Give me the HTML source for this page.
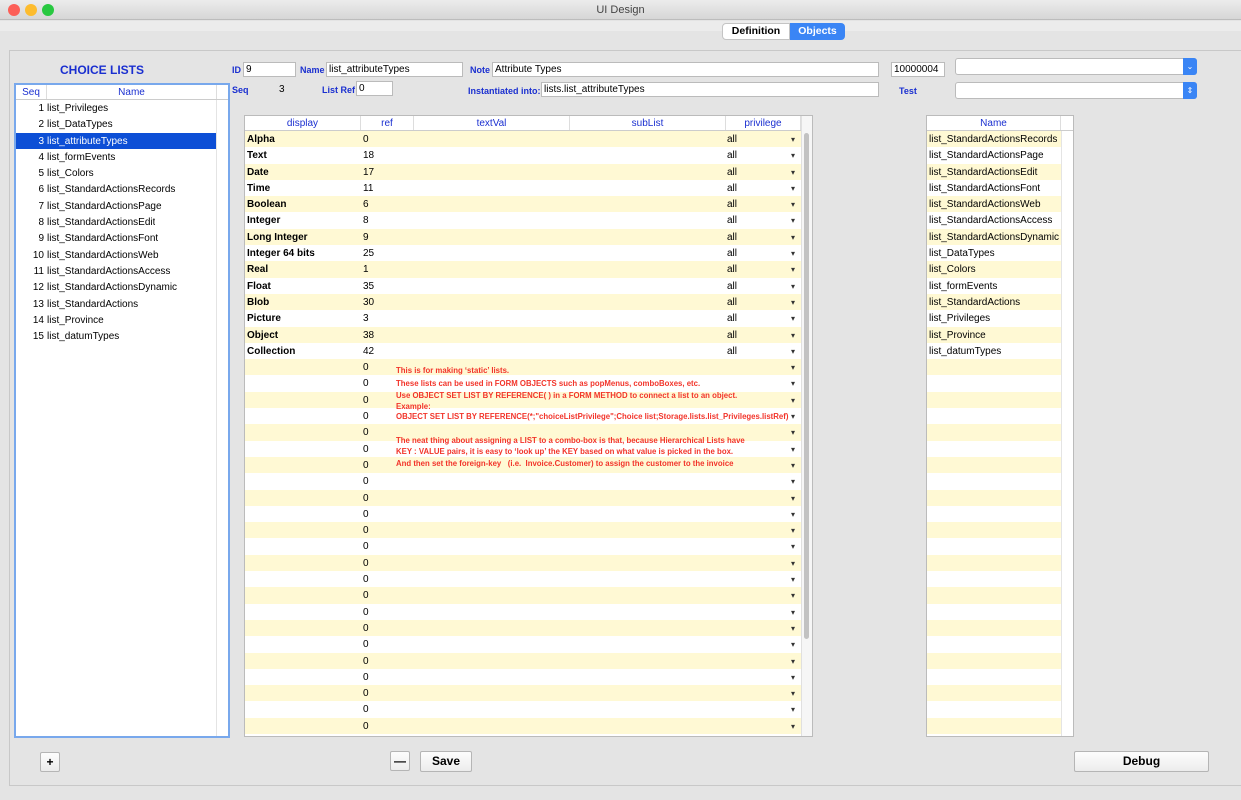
<!DOCTYPE html>
<html><head><meta charset="utf-8"><style>
*{box-sizing:border-box;margin:0;padding:0}
body{width:1241px;height:800px;background:#e4e4e4;font-family:"Liberation Sans",sans-serif;font-size:10px;position:relative;overflow:hidden;color:#000}
.a{position:absolute}
.tb{left:0;top:0;width:1241px;height:20px;background:linear-gradient(#ececec,#d6d6d6);border-bottom:1px solid #bcbcbc;text-align:center;line-height:20px;font-size:11px;color:#444}
.dot{width:12px;height:12px;border-radius:50%;top:4px}
.lbl{color:#1a2fd0;font-weight:bold;font-size:9px}
.inp{background:#fff;border:1px solid #bbb;height:15px;line-height:13px;padding-left:2px;font-size:10px}
.grid{background:#fff;border:1px solid #bbb;overflow:hidden}
.hd{height:15px;border-bottom:1px solid #ccc;display:flex;color:#1a2fd0;font-size:10px;line-height:15px;background:#fff}
.hd div{text-align:center;border-right:1px solid #ddd}
.row{height:16.3px;line-height:18px;display:flex;font-size:10px;position:relative}
.y{background:#fff9d4}
.row div{white-space:nowrap;overflow:hidden}
.m .c1{width:116px;padding-left:2px;font-weight:bold}
.m .c2{width:53px;padding-left:2px}
.m .c3{width:312px}
.m .c5{width:75px;padding-left:1px;position:relative}
.m .c5:after{content:"▾";position:absolute;right:6px;font-size:8px;color:#333}
.note{left:396px;color:#f2342a;font-weight:bold;font-size:7.8px;white-space:nowrap}
.btn{background:linear-gradient(#fdfdfd,#ececec);border:1px solid #b5b5b5;border-radius:2px;text-align:center;font-weight:bold}
.l .row div:first-child{width:31px;text-align:right;padding-right:3px}
</style></head><body>
<div class="a tb">UI Design</div>
<div class="a dot" style="left:8px;background:#fc5f57"></div>
<div class="a dot" style="left:25px;background:#fdbc2e"></div>
<div class="a dot" style="left:42px;background:#28c840"></div>
<div class="a" style="left:0;top:21px;width:1241px;height:10px;background:#ececec"></div>
<div class="a" style="left:722px;top:23px;width:68px;height:17px;background:#fff;border:1px solid #c4c4c4;border-radius:4px 0 0 4px;text-align:center;line-height:15px;font-weight:bold;font-size:10.5px">Definition</div>
<div class="a" style="left:790px;top:23px;width:55px;height:17px;background:#3a85f5;border-radius:0 4px 4px 0;color:#fff;text-align:center;line-height:17px;font-weight:bold;font-size:10.5px">Objects</div>
<div class="a" style="left:9px;top:50px;width:1240px;height:736px;border:1px solid #c8c8c8;border-right:none"></div>

<div class="a" style="left:60px;top:63px;color:#1a2fd0;font-weight:bold;font-size:12px">CHOICE LISTS</div>
<div class="a lbl" style="left:232px;top:65px">ID</div><div class="a inp" style="left:243px;top:62px;width:53px">9</div>
<div class="a lbl" style="left:300px;top:65px">Name</div><div class="a inp" style="left:326px;top:62px;width:137px">list_attributeTypes</div>
<div class="a lbl" style="left:470px;top:65px">Note</div><div class="a inp" style="left:492px;top:62px;width:387px">Attribute Types</div>
<div class="a inp" style="left:891px;top:62px;width:54px">10000004</div>
<div class="a inp" style="left:955px;top:58px;width:242px;height:17px;border-radius:3px"></div>
<div class="a" style="left:1183px;top:58px;width:14px;height:17px;background:#3a85f5;border-radius:0 3px 3px 0;color:#fff;font-size:8px;text-align:center;line-height:17px">⌄</div>
<div class="a lbl" style="left:232px;top:85px">Seq</div><div class="a" style="left:279px;top:84px">3</div>
<div class="a lbl" style="left:322px;top:85px">List Ref</div><div class="a inp" style="left:356px;top:81px;width:37px">0</div>
<div class="a lbl" style="left:468px;top:86px">Instantiated into:</div><div class="a inp" style="left:541px;top:82px;width:338px">lists.list_attributeTypes</div>
<div class="a lbl" style="left:899px;top:86px">Test</div>
<div class="a inp" style="left:955px;top:82px;width:242px;height:17px;border-radius:3px"></div>
<div class="a" style="left:1183px;top:82px;width:14px;height:17px;background:#3a85f5;border-radius:0 3px 3px 0;color:#fff;font-size:8px;text-align:center;line-height:17px">⇕</div>

<!-- left list -->
<div class="a grid l" style="left:14px;top:83px;width:216px;height:655px;border:2px solid #78a8ec">
<div class="hd"><div style="width:31px">Seq</div><div style="width:170px">Name</div></div>
<div class="a" style="left:200px;top:15px;width:1px;height:640px;background:#e4e4e4"></div>
<div class="row"><div>1</div><div>list_Privileges</div></div>
<div class="row"><div>2</div><div>list_DataTypes</div></div>
<div class="row" style="background:#0d4fd6;color:#fff;width:200px"><div>3</div><div>list_attributeTypes</div></div>
<div class="row"><div>4</div><div>list_formEvents</div></div>
<div class="row"><div>5</div><div>list_Colors</div></div>
<div class="row"><div>6</div><div>list_StandardActionsRecords</div></div>
<div class="row"><div>7</div><div>list_StandardActionsPage</div></div>
<div class="row"><div>8</div><div>list_StandardActionsEdit</div></div>
<div class="row"><div>9</div><div>list_StandardActionsFont</div></div>
<div class="row"><div>10</div><div>list_StandardActionsWeb</div></div>
<div class="row"><div>11</div><div>list_StandardActionsAccess</div></div>
<div class="row"><div>12</div><div>list_StandardActionsDynamic</div></div>
<div class="row"><div>13</div><div>list_StandardActions</div></div>
<div class="row"><div>14</div><div>list_Province</div></div>
<div class="row"><div>15</div><div>list_datumTypes</div></div>
</div>

<!-- main grid -->
<div class="a grid m" style="left:244px;top:115px;width:569px;height:622px">
<div class="hd"><div style="width:116px">display</div><div style="width:53px">ref</div><div style="width:156px">textVal</div><div style="width:156px">subList</div><div style="width:75px">privilege</div></div>
<div class="row y"><div class="c1">Alpha</div><div class="c2">0</div><div class="c3"></div><div class="c5">all</div></div>
<div class="row"><div class="c1">Text</div><div class="c2">18</div><div class="c3"></div><div class="c5">all</div></div>
<div class="row y"><div class="c1">Date</div><div class="c2">17</div><div class="c3"></div><div class="c5">all</div></div>
<div class="row"><div class="c1">Time</div><div class="c2">11</div><div class="c3"></div><div class="c5">all</div></div>
<div class="row y"><div class="c1">Boolean</div><div class="c2">6</div><div class="c3"></div><div class="c5">all</div></div>
<div class="row"><div class="c1">Integer</div><div class="c2">8</div><div class="c3"></div><div class="c5">all</div></div>
<div class="row y"><div class="c1">Long Integer</div><div class="c2">9</div><div class="c3"></div><div class="c5">all</div></div>
<div class="row"><div class="c1">Integer 64 bits</div><div class="c2">25</div><div class="c3"></div><div class="c5">all</div></div>
<div class="row y"><div class="c1">Real</div><div class="c2">1</div><div class="c3"></div><div class="c5">all</div></div>
<div class="row"><div class="c1">Float</div><div class="c2">35</div><div class="c3"></div><div class="c5">all</div></div>
<div class="row y"><div class="c1">Blob</div><div class="c2">30</div><div class="c3"></div><div class="c5">all</div></div>
<div class="row"><div class="c1">Picture</div><div class="c2">3</div><div class="c3"></div><div class="c5">all</div></div>
<div class="row y"><div class="c1">Object</div><div class="c2">38</div><div class="c3"></div><div class="c5">all</div></div>
<div class="row"><div class="c1">Collection</div><div class="c2">42</div><div class="c3"></div><div class="c5">all</div></div>
<div class="row y"><div class="c1"></div><div class="c2">0</div><div class="c3"></div><div class="c5"></div></div>
<div class="row"><div class="c1"></div><div class="c2">0</div><div class="c3"></div><div class="c5"></div></div>
<div class="row y"><div class="c1"></div><div class="c2">0</div><div class="c3"></div><div class="c5"></div></div>
<div class="row"><div class="c1"></div><div class="c2">0</div><div class="c3"></div><div class="c5"></div></div>
<div class="row y"><div class="c1"></div><div class="c2">0</div><div class="c3"></div><div class="c5"></div></div>
<div class="row"><div class="c1"></div><div class="c2">0</div><div class="c3"></div><div class="c5"></div></div>
<div class="row y"><div class="c1"></div><div class="c2">0</div><div class="c3"></div><div class="c5"></div></div>
<div class="row"><div class="c1"></div><div class="c2">0</div><div class="c3"></div><div class="c5"></div></div>
<div class="row y"><div class="c1"></div><div class="c2">0</div><div class="c3"></div><div class="c5"></div></div>
<div class="row"><div class="c1"></div><div class="c2">0</div><div class="c3"></div><div class="c5"></div></div>
<div class="row y"><div class="c1"></div><div class="c2">0</div><div class="c3"></div><div class="c5"></div></div>
<div class="row"><div class="c1"></div><div class="c2">0</div><div class="c3"></div><div class="c5"></div></div>
<div class="row y"><div class="c1"></div><div class="c2">0</div><div class="c3"></div><div class="c5"></div></div>
<div class="row"><div class="c1"></div><div class="c2">0</div><div class="c3"></div><div class="c5"></div></div>
<div class="row y"><div class="c1"></div><div class="c2">0</div><div class="c3"></div><div class="c5"></div></div>
<div class="row"><div class="c1"></div><div class="c2">0</div><div class="c3"></div><div class="c5"></div></div>
<div class="row y"><div class="c1"></div><div class="c2">0</div><div class="c3"></div><div class="c5"></div></div>
<div class="row"><div class="c1"></div><div class="c2">0</div><div class="c3"></div><div class="c5"></div></div>
<div class="row y"><div class="c1"></div><div class="c2">0</div><div class="c3"></div><div class="c5"></div></div>
<div class="row"><div class="c1"></div><div class="c2">0</div><div class="c3"></div><div class="c5"></div></div>
<div class="row y"><div class="c1"></div><div class="c2">0</div><div class="c3"></div><div class="c5"></div></div>
<div class="row"><div class="c1"></div><div class="c2">0</div><div class="c3"></div><div class="c5"></div></div>
<div class="row y"><div class="c1"></div><div class="c2">0</div><div class="c3"></div><div class="c5"></div></div>
<div class="a" style="left:556px;top:0;width:12px;height:622px;background:#f6f6f6;border-left:1px solid #e0e0e0"></div>
<div class="a" style="left:559px;top:17px;width:5px;height:506px;background:#c2c2c2;border-radius:3px"></div>
</div>
<div class="a note" style="top:366px">This is for making ‘static’ lists.</div>
<div class="a note" style="top:379px">These lists can be used in FORM OBJECTS such as popMenus, comboBoxes, etc.</div>
<div class="a note" style="top:391px">Use OBJECT SET LIST BY REFERENCE( ) in a FORM METHOD to connect a list to an object.</div>
<div class="a note" style="top:402px">Example:</div>
<div class="a note" style="top:412px">OBJECT SET LIST BY REFERENCE(*;"choiceListPrivilege";Choice list;Storage.lists.list_Privileges.listRef)</div>
<div class="a note" style="top:436px">The neat thing about assigning a LIST to a combo-box is that, because Hierarchical Lists have</div>
<div class="a note" style="top:447px">KEY : VALUE pairs, it is easy to ‘look up’ the KEY based on what value is picked in the box.</div>
<div class="a note" style="top:459px">And then set the foreign-key &nbsp; (i.e.&nbsp; Invoice.Customer) to assign the customer to the invoice</div>

<!-- right grid -->
<div class="a grid" style="left:926px;top:115px;width:148px;height:622px">
<div class="hd"><div style="width:134px">Name</div></div>
<div class="a" style="left:134px;top:15px;width:1px;height:610px;background:#e4e4e4"></div>
<div style="width:134px">
<div class="row y" style="padding-left:2px">list_StandardActionsRecords</div>
<div class="row" style="padding-left:2px">list_StandardActionsPage</div>
<div class="row y" style="padding-left:2px">list_StandardActionsEdit</div>
<div class="row" style="padding-left:2px">list_StandardActionsFont</div>
<div class="row y" style="padding-left:2px">list_StandardActionsWeb</div>
<div class="row" style="padding-left:2px">list_StandardActionsAccess</div>
<div class="row y" style="padding-left:2px">list_StandardActionsDynamic</div>
<div class="row" style="padding-left:2px">list_DataTypes</div>
<div class="row y" style="padding-left:2px">list_Colors</div>
<div class="row" style="padding-left:2px">list_formEvents</div>
<div class="row y" style="padding-left:2px">list_StandardActions</div>
<div class="row" style="padding-left:2px">list_Privileges</div>
<div class="row y" style="padding-left:2px">list_Province</div>
<div class="row" style="padding-left:2px">list_datumTypes</div>
<div class="row y"></div><div class="row"></div><div class="row y"></div><div class="row"></div><div class="row y"></div><div class="row"></div><div class="row y"></div><div class="row"></div><div class="row y"></div><div class="row"></div><div class="row y"></div><div class="row"></div><div class="row y"></div><div class="row"></div><div class="row y"></div><div class="row"></div><div class="row y"></div><div class="row"></div><div class="row y"></div><div class="row"></div><div class="row y"></div><div class="row"></div><div class="row y"></div>
</div></div>

<div class="a btn" style="left:40px;top:752px;width:20px;height:20px;line-height:18px;font-size:12px">+</div>
<div class="a btn" style="left:390px;top:751px;width:20px;height:20px;line-height:18px;font-size:12px">—</div>
<div class="a btn" style="left:420px;top:751px;width:52px;height:21px;line-height:19px;font-size:12px">Save</div>
<div class="a btn" style="left:1074px;top:751px;width:135px;height:21px;line-height:19px;font-size:12px">Debug</div>
</body></html>
